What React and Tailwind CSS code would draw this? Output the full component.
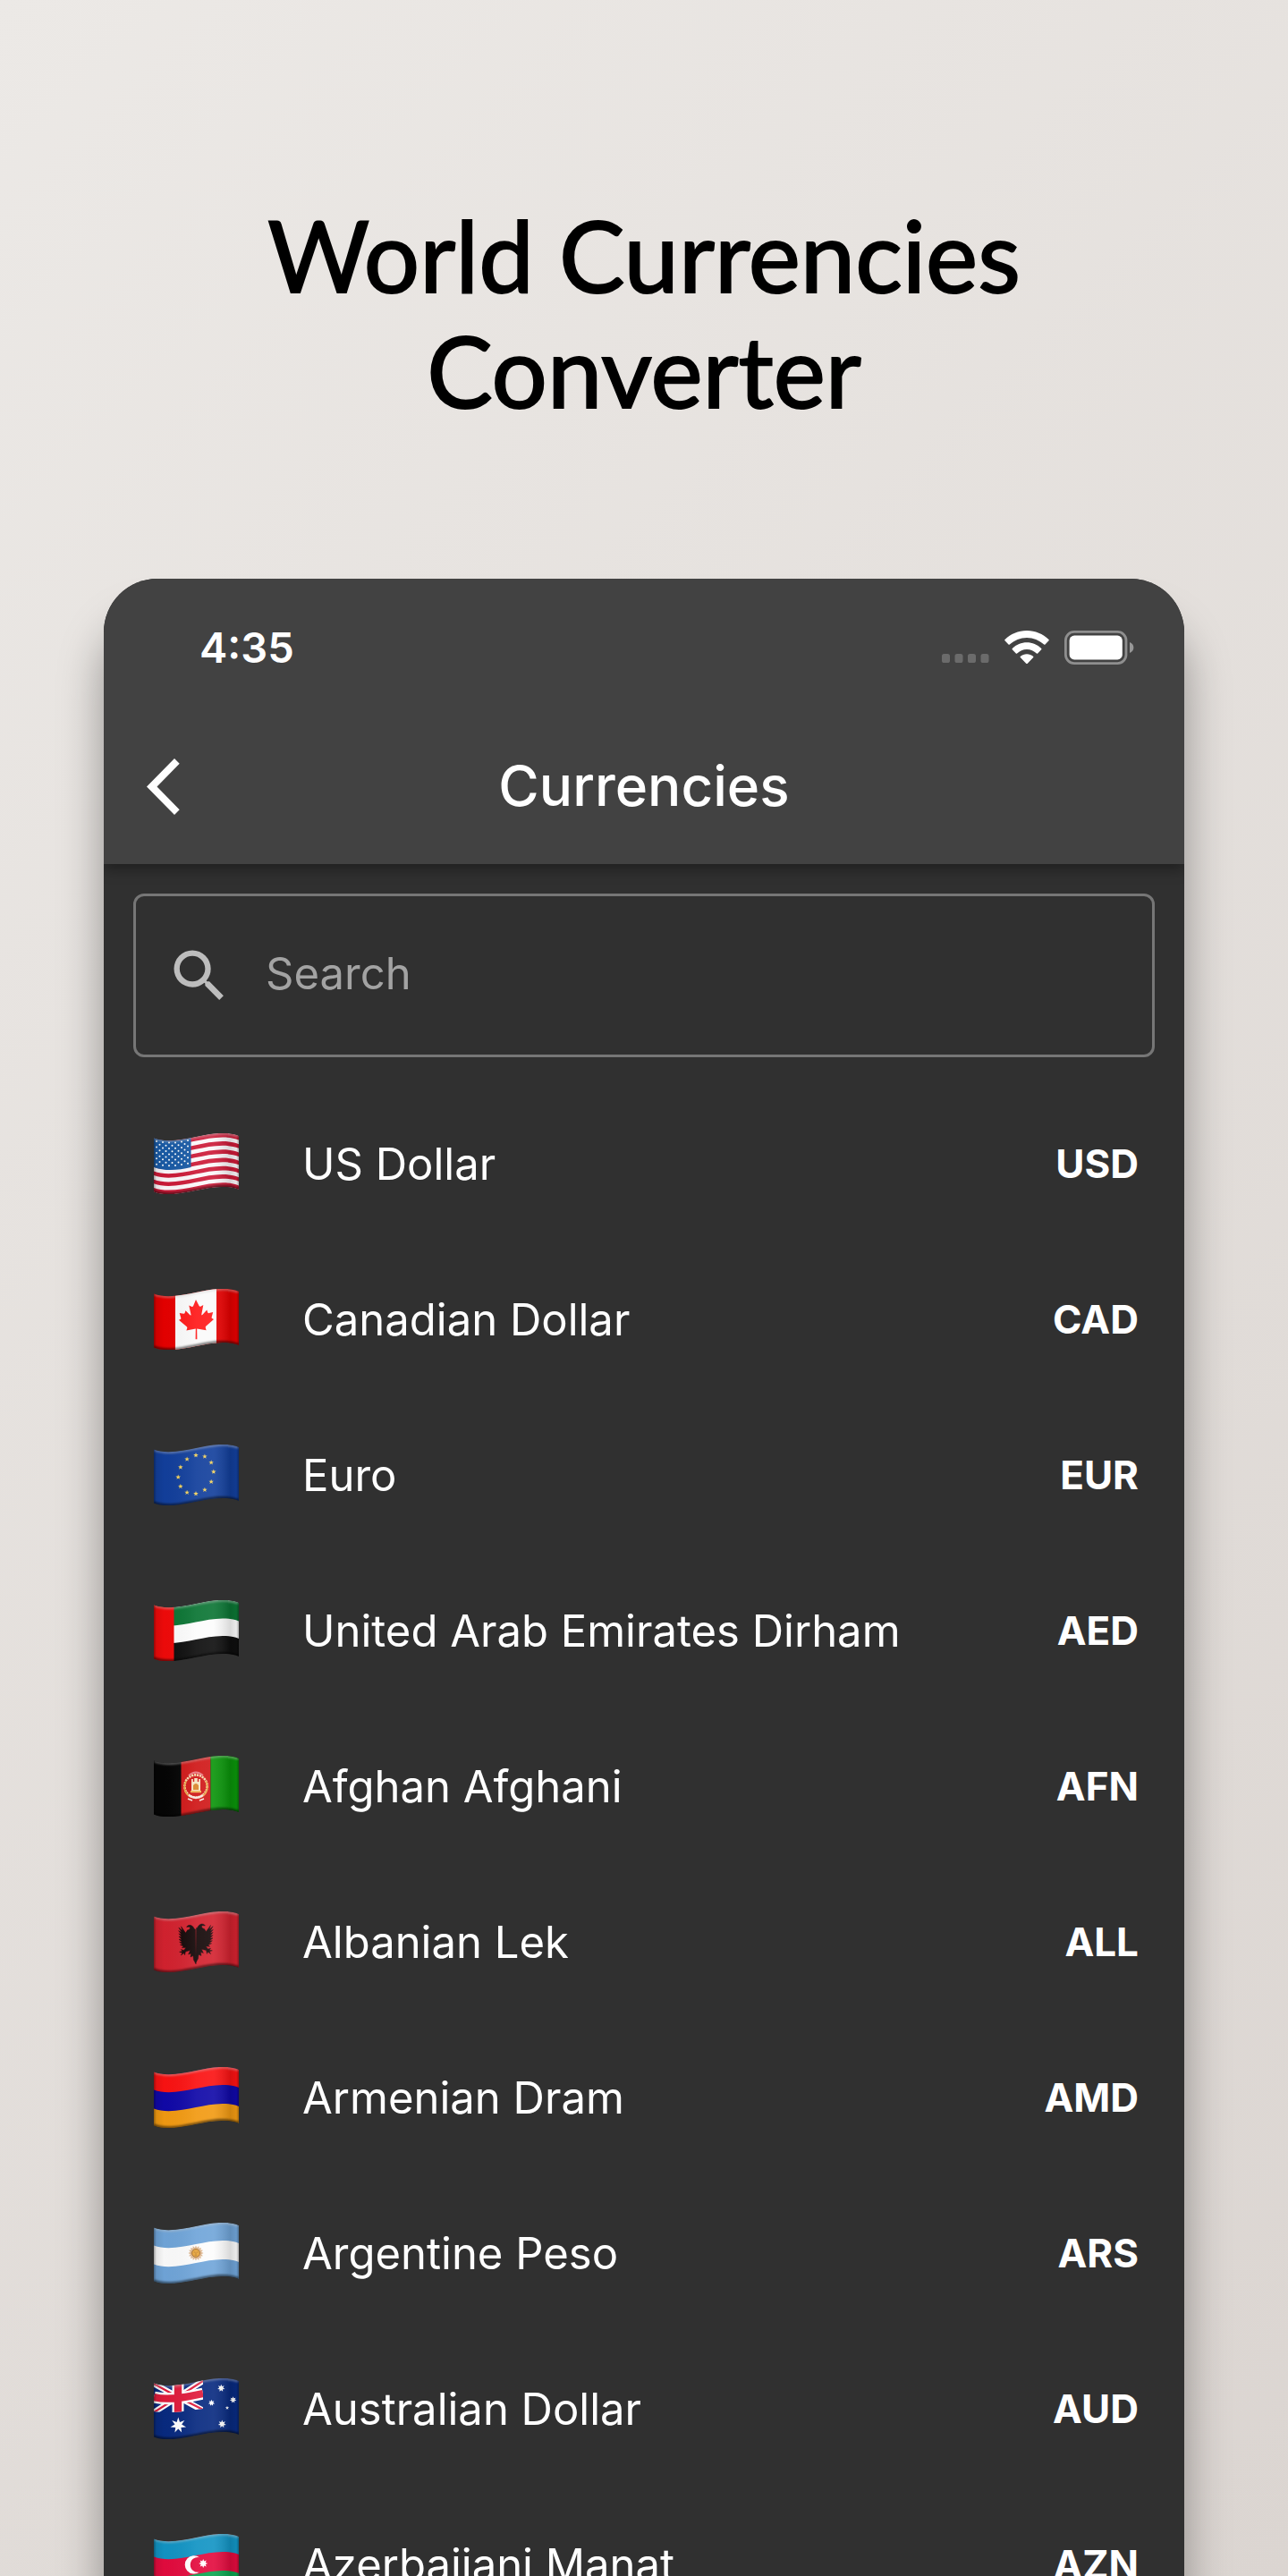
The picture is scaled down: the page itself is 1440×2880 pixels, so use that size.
import React from "react";

/* Vertical displacement of the waving cloth, shared by every flag band. */
const wave = (y) => `M0 ${5.5 + y} C14 ${11 + y} 32 ${7 + y} 47 ${4 + y} S80 ${y - 3} 95 ${3 + y}`;
const band = (a, b) => `${wave(a)} L95 ${3 + b} C80 ${b - 3} 62 ${1 + b} 47 ${4 + b} S14 ${11 + b} 0 ${5.5 + b} Z`;
const H = 60;

const Band = ({ a, b, fill }) => <path d={band(a, b)} fill={fill} />;

function starPoints(cx, cy, r, n, inner) {
  const pts = [];
  for (let i = 0; i < n * 2; i++) {
    const rad = i % 2 ? r * inner : r;
    const t = (Math.PI * i) / n - Math.PI / 2;
    pts.push(`${(cx + rad * Math.cos(t)).toFixed(2)},${(cy + rad * Math.sin(t)).toFixed(2)}`);
  }
  return pts.join(" ");
}
const Star = ({ x, y, r, n = 5, inner = 0.42, fill = "#fff" }) => (
  <polygon points={starPoints(x, y, r, n, inner)} fill={fill} />
);

function UnitedStates() {
  const s = H / 13;
  const stars = [];
  for (let row = 0; row < 9; row++) {
    for (let col = 0; col < (row % 2 ? 5 : 6); col++) {
      const x = 3 + col * 7 + (row % 2 ? 3.5 : 0);
      const sag = 2.6 * Math.sin((x / 41) * Math.PI) - (x / 41) * 1.2;
      stars.push(<circle key={`${row}-${col}`} cx={x} cy={8.6 + row * 3.2 + sag} r="1" fill="#fff" />);
    }
  }
  return (
    <>
      <Band a={0} b={H} fill="#fbf7fa" />
      {[0, 2, 4, 6, 8, 10, 12].map((i) => (
        <Band key={i} a={i * s} b={(i + 1) * s} fill="#cc1a38" />
      ))}
      <path d="M0 4 C14 11 28 8 41.5 5 V38 C28 41 14 43 0 38 Z" fill="#1a5ba6" />
      {stars}
    </>
  );
}

const Canada = () => (
  <>
    <rect width="95" height="72" fill="#e60000" />
    <rect x="24" width="46" height="72" fill="#fafafa" />
    <path
      d="M47 12 l3.6 7 q.7 1 2 .4 l2.7-1.4 -2 10.4 q-.2 1.6 1.2.4 l4.8-5.2 1 2.8 q.3.9 1.4.7 l4.5-1 -1.6 5.6 q-.3 1 .6 1.4 l1.8.9 -8.8 7.8 q-.7.7-.4 1.6 l.8 2.8 -10.4-1.6 .2 11.6 h-1.8 l.2-11.6 -10.4 1.9 .9-2.8 q.2-.9-.5-1.5 l-8.9-7.4 1.9-.9 q.8-.5.5-1.4 l-1.6-5.5 4.6.8 q1 .1 1.3-.8 l.9-2.7 5 4.9 q1.2 1 1-.5 l-2.2-10.3 2.8 1.4 q1.2.5 1.9-.5 Z"
      fill="#ff1a1a"
    />
  </>
);

const Europe = () => (
  <>
    <Band a={0} b={H} fill="#123f9c" />
    {Array.from({ length: 12 }, (_, i) => {
      const t = (i * Math.PI) / 6;
      return (
        <Star key={i} x={47 + 19.8 * Math.sin(t)} y={33.5 - 21.5 * Math.cos(t) - 3 * Math.sin(t)} r={2.9} fill="#f2d15c" />
      );
    })}
  </>
);

const Emirates = () => (
  <>
    <Band a={0} b={H} fill="#0e0e0e" />
    <Band a={0} b={40} fill="#fcfcfc" />
    <Band a={0} b={20.5} fill="#0b7534" />
    <rect width="22.5" height="72" fill="#f00a0a" />
  </>
);

const Afghanistan = () => (
  <>
    <rect width="95" height="72" fill="#050505" />
    <rect x="30.5" width="33" height="72" fill="#d01818" />
    <rect x="63.5" width="32" height="72" fill="#0a940a" />
    <g fill="none" stroke="#f5dcae">
      <circle cx="47" cy="34" r="12.6" strokeWidth="2.6" strokeDasharray="2.2 .8" />
      <path d="M36 28 q-5 12 5 18 M58 28 q5 12 -5 18" strokeWidth="1.6" stroke="#e9a345" />
      <path d="M39 22 q8-7 16 0" stroke="#ec7c84" strokeWidth="2" />
      <path d="M39 44 q8 6 16 0" stroke="#f8e3dc" strokeWidth="2.2" />
      <path d="M38 48 l5 2 M56 48 l-5 2" stroke="#f8e3dc" strokeWidth="1.6" />
    </g>
    <path d="M42 40 v-14 h1.8 v3 h1.4 v-4 h3.6 v4 h1.4 v-3 H52 v14 Z" fill="#f6e2c0" />
    <path d="M44 38 v-5 q3-4 6 0 v5 Z" fill="#d9862c" />
    <rect x="41" y="39" width="12" height="2.2" fill="#f2b65a" />
  </>
);

const eagleWing =
  "M46.5 20 C44.5 20 45 17 42 15.8 C40 14.8 37.6 15.4 36.6 17.4 L39.6 17.2 C41.4 18 40.4 20.6 37.6 20.8 L35.6 24 L30.5 16.8 L31.8 21.5 L27.8 18 L31 23.5 L27.6 21.6 L31 26 L27.8 24.8 L31 28.6 L27.9 28 L31.2 31.4 L28 31.2 L31.6 34.2 L28.6 34.2 L32.2 36.8 L29.4 37.2 L33.2 39 L31.4 40.6 L35.8 40.4 L33.6 43.4 L30.4 42.6 L32 44.6 L28.6 45.2 L31.8 46.2 L30.4 49 L33.6 46.6 L34.6 48.8 L35.4 45 L40.6 43.6 L38.6 48 L41.6 47 L41 51 L44 49.6 L44.4 54 L47.1 59 Z";
const Albania = () => (
  <>
    <Band a={0} b={H} fill="#d3222f" />
    <g fill="#140808" stroke="#140808" strokeWidth=".4">
      <path d={eagleWing} />
      <path d={eagleWing} transform="translate(94 -1.4) scale(-1 1)" />
    </g>
  </>
);

const Armenia = () => (
  <>
    <Band a={0} b={H} fill="#f29a12" />
    <Band a={0} b={41} fill="#1008a8" />
    <Band a={0} b={20} fill="#fb1212" />
  </>
);

const Argentina = () => (
  <>
    <Band a={0} b={H} fill="#70a5d9" />
    <Band a={20} b={41} fill="#fcfcfc" />
    <Star x={47} y={34} r={8.6} n={16} inner={0.72} fill="#dcb48c" />
    <circle cx="47" cy="34" r="4.4" fill="#e9a63a" stroke="#a8702c" strokeWidth="1" />
    <path d="M44.8 33 h1.6 M47.8 33 h1.6 M47 33.5 v1.8 M45.6 36.2 h2.8" stroke="#a8702c" strokeWidth=".7" />
  </>
);

const Australia = () => (
  <>
    <Band a={0} b={H} fill="#082a80" />
    <clipPath id="canton">
      <path d="M0 0 H55 V34 C40 36 18 40 0 37 Z" />
    </clipPath>
    <g clipPath="url(#canton)">
      <path d="M0 6 L55 36 M0 38 L55 3" stroke="#fff" strokeWidth="6.5" />
      <path d="M0 6 L27 21 M55 35 L27 21 M0 38 L27 21 M55 3 L27 21" stroke="#e01c3c" strokeWidth="2.2" />
      <path d="M27 0 V42 M0 21 C16 25 36 21 55 17" stroke="#fff" strokeWidth="13" fill="none" />
      <path d="M27 0 V42 M0 21 C16 25 36 21 55 17" stroke="#e01c3c" strokeWidth="8.4" fill="none" />
    </g>
    <Star x={27.3} y={52.5} r={9} n={7} inner={0.44} />
    <Star x={75.3} y={11} r={4.3} n={7} inner={0.5} />
    <Star x={64.5} y={27.5} r={3.7} n={7} inner={0.5} />
    <Star x={88.6} y={24} r={3.8} n={7} inner={0.5} />
    <Star x={82} y={33} r={2.3} />
    <Star x={76.3} y={51} r={4.6} n={7} inner={0.5} />
  </>
);

const Azerbaijan = () => (
  <>
    <Band a={0} b={H} fill="#0aa650" />
    <Band a={0} b={41} fill="#e30b3e" />
    <Band a={0} b={20} fill="#1294c4" />
    <path d="M51 26.2 A10.2 10.2 0 1 0 51 42.6 A8.4 8.4 0 1 1 51 26.2 Z" fill="#fff" />
    <Star x={55.2} y={33} r={5} n={8} inner={0.55} />
  </>
);

const currencies = [
  { code: "USD", name: "US Dollar", Flag: UnitedStates },
  { code: "CAD", name: "Canadian Dollar", Flag: Canada },
  { code: "EUR", name: "Euro", Flag: Europe },
  { code: "AED", name: "United Arab Emirates Dirham", Flag: Emirates },
  { code: "AFN", name: "Afghan Afghani", Flag: Afghanistan },
  { code: "ALL", name: "Albanian Lek", Flag: Albania },
  { code: "AMD", name: "Armenian Dram", Flag: Armenia },
  { code: "ARS", name: "Argentine Peso", Flag: Argentina },
  { code: "AUD", name: "Australian Dollar", Flag: Australia },
  { code: "AZN", name: "Azerbaijani Manat", Flag: Azerbaijan },
];

function FlagIcon({ children }) {
  return (
    <svg viewBox="0 0 95 68" className="h-[68px] w-[95px] shrink-0" aria-hidden="true">
      <g clipPath="url(#flag-cloth)">
        {children}
        <rect width="95" height="72" fill="url(#flag-shade)" />
        <path d={wave(0.5)} fill="none" stroke="#c8c8c8" strokeOpacity=".45" strokeWidth="2.4" filter="url(#flag-soft)" />
        <path d={wave(H - 0.5)} fill="none" stroke="#000" strokeOpacity=".55" strokeWidth="3" filter="url(#flag-soft)" />
        <path d="M0 0 V68 M95 0 V68" stroke="#000" strokeOpacity=".4" strokeWidth="2" filter="url(#flag-side)" />
      </g>
    </svg>
  );
}

/* Clip shape, folds and edge softening used by all the flags. */
function FlagDefs() {
  return (
    <svg className="absolute size-0" aria-hidden="true">
      <defs>
        <clipPath id="flag-cloth">
          <path d={band(0, H)} />
        </clipPath>
        <linearGradient id="flag-shade">
          <stop offset="0" stopColor="#000" stopOpacity=".12" />
          <stop offset=".12" stopColor="#000" stopOpacity=".02" />
          <stop offset=".5" stopColor="#fff" stopOpacity=".07" />
          <stop offset=".7" stopColor="#fff" stopOpacity=".09" />
          <stop offset=".9" stopColor="#000" stopOpacity=".14" />
          <stop offset="1" stopColor="#000" stopOpacity=".04" />
        </linearGradient>
        <filter id="flag-soft" x="-10%" y="-50%" width="120%" height="200%">
          <feGaussianBlur stdDeviation="1" />
        </filter>
        <filter id="flag-side" filterUnits="userSpaceOnUse" x="-5" y="-5" width="105" height="80">
          <feGaussianBlur stdDeviation=".8" />
        </filter>
      </defs>
    </svg>
  );
}

function StatusBar() {
  return (
    <div className="flex h-[145px] items-center justify-between pt-2 pr-14 pl-[107px]">
      <span className="text-[47px] leading-none font-semibold">4:35</span>
      <div className="flex items-center">
        <svg viewBox="0 0 53 37" className="mr-[17px] h-[37px] w-[53px]" fill="#6b6b6b" aria-hidden="true">
          <rect x="0" y="26" width="9" height="10" rx="2.6" />
          <rect x="14.5" y="26" width="9" height="10" rx="2.6" />
          <rect x="29" y="26" width="9" height="10" rx="2.6" />
          <rect x="43.5" y="26" width="9" height="10" rx="2.6" />
        </svg>
        <svg viewBox="0 0 50 37" className="mr-[17px] h-[37px] w-[50px]" fill="#fff" role="img" aria-label="Wi-Fi">
          <path d="M25 0C34.5 0 43 3.8 49.5 10q.6.7 0 1.3l-4 4.2q-.6.6-1.3 0C39 11 32.3 8 25 8S11 11 5.8 15.5q-.7.6-1.3 0l-4-4.2q-.6-.6 0-1.3C7 3.8 15.5 0 25 0z" />
          <path d="M25 13.3c6 0 11.8 2.5 16.2 6.6q.7.7 0 1.4l-4 4.2q-.6.6-1.3 0C33 22.8 29.2 21 25 21s-8 1.8-10.9 4.5q-.7.6-1.3 0l-4-4.2q-.7-.7 0-1.4c4.4-4.1 10.2-6.6 16.2-6.6z" />
          <path d="M25 26.2c2.7 0 5.2 1 7 2.6q.8.7 0 1.5l-6.2 6.4q-.8.8-1.6 0L18 30.3q-.8-.8 0-1.5c1.8-1.6 4.3-2.6 7-2.6z" />
        </svg>
        <svg viewBox="0 0 78 38" className="h-[38px] w-[78px]" role="img" aria-label="Battery full">
          <rect x="1.4" y="1.4" width="67.6" height="35.2" rx="9.5" fill="none" stroke="#8f8f8f" strokeWidth="2.8" />
          <rect x="5.6" y="5.6" width="59.2" height="26.8" rx="5.5" fill="#fff" />
          <path d="M73 13v12c2.6-1 4.4-3.3 4.4-6s-1.8-5-4.4-6z" fill="#979797" />
        </svg>
      </div>
    </div>
  );
}

function NavBar() {
  return (
    <div className="grid h-[174px] grid-cols-[1fr_auto_1fr] items-center px-12">
      <button type="button" aria-label="Back" className="justify-self-start">
        <svg viewBox="0 0 37 63" className="h-[63px] w-[37px]" fill="#fff" aria-hidden="true">
          <path d="M0 31.5 31 0l5.7 5.8L11.5 31.5l25.2 25.7L31 63z" />
        </svg>
      </button>
      <h2 className="text-[62px] leading-none font-medium">Currencies</h2>
    </div>
  );
}

export default function App() {
  return (
    <main className="flex h-screen flex-col overflow-hidden bg-linear-135 from-[#ece9e6] to-[#dbd5d1] px-[116px] font-['Inter',sans-serif]">
      <FlagDefs />
      <h1 className="mx-auto max-w-[960px] pt-[220px] pb-[169px] text-center font-['Lato',sans-serif] text-[110px] leading-[129px] text-black [-webkit-text-stroke:2px_black]">
        World Currencies Converter
      </h1>

      <section className="flex min-h-0 flex-1 flex-col overflow-hidden rounded-t-[60px] bg-[#303030] text-white shadow-[0_50px_50px_rgba(0,0,0,0.36)]">
        <header className="relative shrink-0 bg-[#424242] shadow-[0_6px_14px_rgba(0,0,0,0.35)]">
          <StatusBar />
          <NavBar />
        </header>

        <div className="flex min-h-0 flex-1 flex-col overflow-hidden pt-[33px]">
          <label className="mx-[33px] flex h-[183px] shrink-0 items-center rounded-xl border-3 border-[#767676] pl-[33px]">
            <svg viewBox="0 0 24 24" className="size-[76px]" fill="#bdbdbd" aria-hidden="true">
              <path d="M15.5 14h-.79l-.28-.27A6.471 6.471 0 0 0 16 9.5 6.5 6.5 0 1 0 9.5 16c1.61 0 3.09-.59 4.23-1.57l.27.28v.79l5 4.99L20.49 19l-4.99-5zm-6 0C7.01 14 5 11.99 5 9.5S7.01 5 9.5 5 14 7.01 14 9.5 11.99 14 9.5 14z" />
            </svg>
            <input
              type="search"
              aria-label="Search currencies"
              placeholder="Search"
              className="ml-9 min-w-0 flex-1 bg-transparent pb-1 text-[49px] outline-none placeholder:text-[#a3a3a3]"
            />
          </label>

          <ul className="mt-8">
            {currencies.map(({ code, name, Flag }) => (
              <li key={code}>
                <button type="button" className="flex h-[174px] w-full items-center pr-[51px] pl-14 text-left">
                  <FlagIcon>
                    <Flag />
                  </FlagIcon>
                  <span className="ml-[71px] flex-1 text-[49px] leading-none">{name}</span>
                  <span className="text-[44px] leading-none font-bold">{code}</span>
                </button>
              </li>
            ))}
          </ul>
        </div>
      </section>
    </main>
  );
}
